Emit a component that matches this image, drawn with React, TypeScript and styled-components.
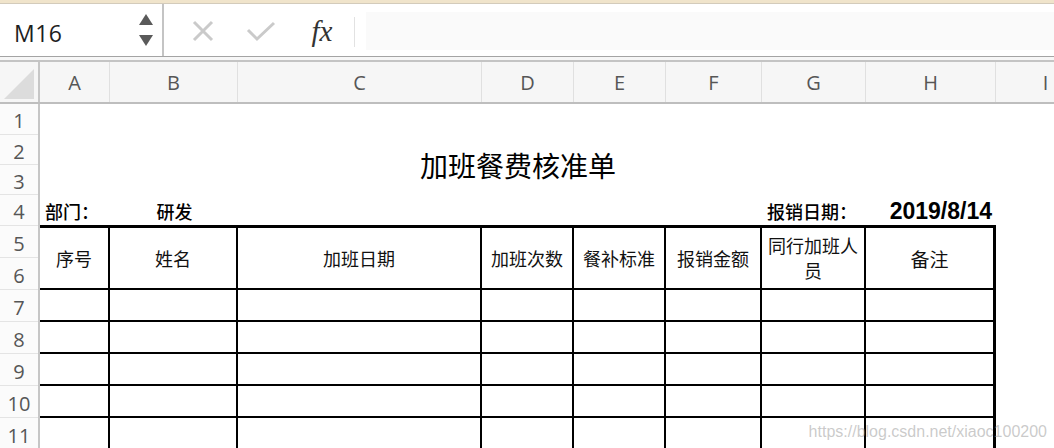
import React from "react";
import styled, { createGlobalStyle } from "styled-components";

const GlobalStyle = createGlobalStyle`
  html, body {
    margin: 0;
    padding: 0;
    background: #ffffff;
    overflow: hidden;
  }
  * {
    box-sizing: border-box;
  }
`;

const CJK = `"Noto Sans CJK SC", "Noto Sans", sans-serif`;
const UI = `"Open Sans", "Liberation Sans", sans-serif`;

// column widths of A..H, the I column runs off the right edge
const COLS = [70, 128, 244, 92, 92, 96, 104, 130];
const COL_TEMPLATE = COLS.map((w) => `${w}px`).join(" ");
const LETTERS = ["A", "B", "C", "D", "E", "F", "G", "H", "I"];
const ROW_HEIGHTS = [31, 30, 30, 31, 32, 32, 32, 32, 32, 32, 32];

const Window = styled.div`
  position: relative;
  width: 1054px;
  height: 448px;
  overflow: hidden;
  background: #fff;
`;

const TopStrip = styled.div`
  height: 4px;
  background: #f0e4cb;
  border-bottom: 1px solid #d3cbbb;
`;

const FormulaBar = styled.div`
  display: flex;
  height: 53px;
  border-bottom: 1px solid #a4a4a4;
`;

const NameBox = styled.div`
  display: flex;
  align-items: center;
  width: 164px;
  padding-left: 14px;
  border-right: 2px solid #c4c4c4;
`;

const NameText = styled.span`
  flex: 1;
  padding-top: 5px;
  font-family: ${UI};
  font-size: 23px;
  color: #1e1e1e;
  letter-spacing: 0.5px;
`;

const Spinner = styled.div`
  display: flex;
  flex-direction: column;
  align-items: center;
  gap: 10px;
  width: 16px;
  margin-right: 8px;
`;

const Arrow = styled.div<{ $down?: boolean }>`
  width: 0;
  height: 0;
  border-left: 7px solid transparent;
  border-right: 7px solid transparent;
  ${({ $down }) =>
    $down ? "border-top: 11px solid #5a5a5a;" : "border-bottom: 11px solid #5a5a5a;"}
`;

const Actions = styled.div`
  display: flex;
  align-items: center;
  padding-left: 10px;
`;

const ActionSlot = styled.div<{ $w: number }>`
  display: flex;
  align-items: center;
  justify-content: center;
  width: ${({ $w }) => $w}px;
  height: 100%;
  padding-top: 2px;
`;

const FxText = styled.span`
  font-family: "Liberation Serif", "DejaVu Serif", serif;
  font-style: italic;
  font-size: 29px;
  color: #333;
`;

const Divider = styled.div`
  width: 1px;
  align-self: center;
  height: 30px;
  margin-top: 4px;
  background: #e2e2e2;
`;

const FormulaInput = styled.div`
  flex: 1;
  margin: 8px 0 6px 11px;
  background: #fafafa;
`;

const BarSpacer = styled.div`
  height: 5px;
  background: #f7f7f7;
  border-bottom: 2px solid #c4c4c4;
`;

const ColumnHeader = styled.div`
  display: grid;
  grid-template-columns: 40px ${COL_TEMPLATE} 100px;
  height: 42px;
  background: #f6f6f6;
  border-bottom: 2px solid #bebebe;
`;

const Corner = styled.div`
  display: flex;
  align-items: flex-end;
  padding: 0 4px 3px 4px;
  border-right: 2px solid #c6c6c6;
`;

const ColLabel = styled.div`
  display: flex;
  align-items: center;
  justify-content: center;
  font-family: ${UI};
  font-size: 20px;
  color: #565656;
  border-right: 1px solid #e0e0e0;
`;

const SheetBody = styled.div`
  display: flex;
`;

const RowHeaders = styled.div`
  display: flex;
  flex-direction: column;
  width: 40px;
  flex-shrink: 0;
  border-right: 2px solid #c6c6c6;
  background: #fbfbfb;
`;

const RowNum = styled.div<{ $h: number }>`
  display: flex;
  align-items: center;
  justify-content: center;
  height: ${({ $h }) => $h}px;
  padding-top: 3px;
  font-family: ${UI};
  font-size: 20px;
  color: #565656;
  border-bottom: 1px solid #e4e4e4;
`;

const Content = styled.div`
  display: flex;
  flex-direction: column;
`;

const TitleRow = styled.div`
  display: flex;
  align-items: center;
  justify-content: center;
  width: 956px;
  height: 91px;
  padding-top: 31px;
`;

const Title = styled.h1`
  margin: 0;
  font-family: ${CJK};
  font-weight: 400;
  font-size: 28px;
  color: #000;
`;

const InfoRow = styled.div`
  display: grid;
  grid-template-columns: ${COL_TEMPLATE};
  height: 30px;
`;

const InfoCell = styled.div<{ $align?: string; $col?: number }>`
  display: flex;
  align-items: flex-end;
  justify-content: ${({ $align }) => $align || "flex-start"};
  grid-column: ${({ $col }) => $col || "auto"};
  padding: 0 4px 1px 5px;
  font-family: ${CJK};
  font-size: 18px;
  font-weight: 500;
  color: #000;
  white-space: nowrap;
`;

const DateText = styled.span`
  font-family: "Liberation Sans", Arial, sans-serif;
  font-weight: 700;
  font-size: 23px;
  line-height: 26px;
`;

const Table = styled.div`
  display: grid;
  grid-template-columns: ${COL_TEMPLATE};
  border-top: 3px solid #000;
`;

const HeadCell = styled.div<{ $size?: number }>`
  display: flex;
  align-items: center;
  justify-content: center;
  height: 62px;
  padding: 0 5px;
  font-family: ${CJK};
  font-size: ${({ $size }) => $size || 18}px;
  line-height: 25px;
  color: #111;
  text-align: center;
  border-right: 2px solid #000;
  border-bottom: 2px solid #000;
  &:nth-child(8n) {
    border-right-width: 3px;
  }
`;

const BodyCell = styled.div`
  height: 32px;
  border-right: 2px solid #000;
  border-bottom: 2px solid #000;
  &:nth-child(8n) {
    border-right-width: 3px;
  }
`;

const Watermark = styled.div`
  position: absolute;
  right: 7px;
  bottom: 7px;
  font-family: "Liberation Sans", Arial, sans-serif;
  font-size: 16px;
  color: rgba(150, 150, 150, 0.5);
  pointer-events: none;
`;

const HEADERS = [
  { text: "序号" },
  { text: "姓名" },
  { text: "加班日期" },
  { text: "加班次数" },
  { text: "餐补标准" },
  { text: "报销金额" },
  { text: "同行加班人员" },
  { text: "备注", size: 19 },
];

const CrossIcon = () => (
  <svg width="22" height="22" viewBox="0 0 22 22">
    <path d="M2 2 L20 20 M20 2 L2 20" stroke="#cacaca" strokeWidth="3" fill="none" />
  </svg>
);

const CheckIcon = () => (
  <svg width="30" height="22" viewBox="0 0 30 22">
    <path d="M2 10 L11 19 L28 3" stroke="#cacaca" strokeWidth="3" fill="none" />
  </svg>
);

const CornerTriangle = () => (
  <svg width="30" height="30" viewBox="0 0 30 30">
    <polygon points="30,0 30,30 0,30" fill="#dcdcdc" />
  </svg>
);

const App = () => {
  return (
    <Window>
      <GlobalStyle />
      <TopStrip />
      <FormulaBar>
        <NameBox>
          <NameText>M16</NameText>
          <Spinner>
            <Arrow />
            <Arrow $down />
          </Spinner>
        </NameBox>
        <Actions>
          <ActionSlot $w={58}>
            <CrossIcon />
          </ActionSlot>
          <ActionSlot $w={58}>
            <CheckIcon />
          </ActionSlot>
          <ActionSlot $w={64}>
            <FxText>fx</FxText>
          </ActionSlot>
        </Actions>
        <Divider />
        <FormulaInput />
      </FormulaBar>
      <BarSpacer />

      <ColumnHeader>
        <Corner>
          <CornerTriangle />
        </Corner>
        {LETTERS.map((l) => (
          <ColLabel key={l}>{l}</ColLabel>
        ))}
      </ColumnHeader>

      <SheetBody>
        <RowHeaders>
          {ROW_HEIGHTS.map((h, i) => (
            <RowNum key={i} $h={h}>
              {i + 1}
            </RowNum>
          ))}
        </RowHeaders>

        <Content>
          <TitleRow>
            <Title>加班餐费核准单</Title>
          </TitleRow>

          <InfoRow>
            <InfoCell>部门：</InfoCell>
            <InfoCell $align="center">研发</InfoCell>
            <InfoCell $col={7}>报销日期：</InfoCell>
            <InfoCell $align="flex-end">
              <DateText>2019/8/14</DateText>
            </InfoCell>
          </InfoRow>

          <Table>
            {HEADERS.map((h) => (
              <HeadCell key={h.text} $size={h.size}>
                {h.text}
              </HeadCell>
            ))}
            {Array.from({ length: 5 * 8 }).map((_, i) => (
              <BodyCell key={i} />
            ))}
          </Table>
        </Content>
      </SheetBody>

      <Watermark>https://blog.csdn.net/xiaoc100200</Watermark>
    </Window>
  );
};

export default App;
